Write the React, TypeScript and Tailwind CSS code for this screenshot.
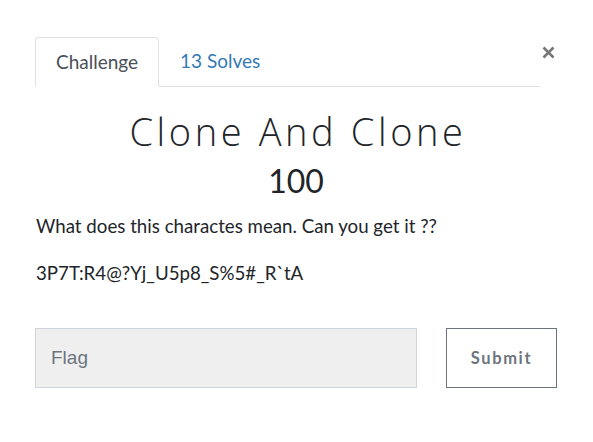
import React from "react";

export default function App() {
  return (
    <div className="min-h-[442px] w-[593px] bg-white font-['Lato',sans-serif] text-[#212529]">
      <div className="pl-[35px] pr-[36px] pt-[37px]">
        <div className="flex items-start">
          <div className="flex flex-1 border-b border-[#dee2e6]">
            <div className="-mb-px flex h-[50px] w-[124px] items-center rounded-t-[4px] border border-[#dee2e6] border-b-white bg-white pl-[20px] text-[19px] text-[#495057]">
              Challenge
            </div>
            <div className="flex h-[49px] items-center pl-[21px] text-[19px] text-[#337ab7]">
              13 Solves
            </div>
          </div>
          <div className="flex w-[17px] justify-end pr-[2px] pt-[9px]">
            <svg width="13" height="13" viewBox="0 0 13 13">
              <path d="M1.5 1.5 L11.5 11.5 M11.5 1.5 L1.5 11.5" stroke="#777" strokeWidth="2.6" strokeLinecap="butt" />
            </svg>
          </div>
        </div>
        <h1 className="mt-[20px] pl-[4px] text-center font-['Open_Sans',sans-serif] text-[38px] font-light leading-[48px] tracking-[3.6px] text-[#212529]">
          Clone And Clone
        </h1>
        <h3 className="mt-[8px] text-center text-[32px] leading-[36px] text-[#212529]">100</h3>
        <p className="mt-[13px] pl-[1px] text-[18.7px] leading-[28px] text-[#212529]">
          What does this charactes mean. Can you get it ??
        </p>
        <p className="mt-[19px] pl-[1px] text-[18.7px] leading-[28px] text-[#212529]">
          3P7T:R4@?Yj_U5p8_S%5#_R`tA
        </p>
        <div className="mt-[41px] flex">
          <input
            placeholder="Flag"
            className="h-[60px] w-[382px] border border-[#ced4da] bg-[#efefef] pl-[15px] font-['Liberation_Sans',sans-serif] text-[19px] text-[#495057] outline-none placeholder:text-[#6c757d]"
          />
          <div className="flex-1" />
          <button className="h-[60px] w-[111px] border border-[#6c757d] bg-white text-[16.5px] font-bold tracking-[1.6px] text-[#6c757d]">
            Submit
          </button>
        </div>
      </div>
    </div>
  );
}
